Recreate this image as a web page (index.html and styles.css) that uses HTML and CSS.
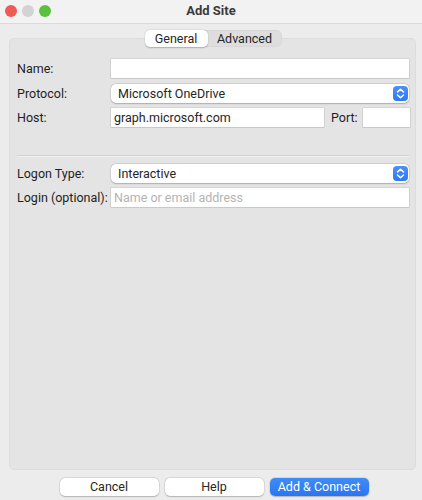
FILE: index.html
```html
<!DOCTYPE html>
<html>
<head>
<meta charset="utf-8">
<link rel="stylesheet" href="styles.css">
</head>
<body>
<div class="window">
  <div class="titlebar">
    <div class="lights">
      <span class="light red"></span>
      <span class="light gray"></span>
      <span class="light green"></span>
    </div>
    <div class="title">Add Site</div>
  </div>
  <div class="main">
    <div class="group">
      <div class="tabs">
        <div class="seg">
          <span class="tab active">General</span>
          <span class="tab">Advanced</span>
        </div>
      </div>
      <div class="form">
        <div class="row">
          <label class="lbl">Name:</label>
          <div class="field"></div>
        </div>
        <div class="row">
          <label class="lbl">Protocol:</label>
          <div class="select"><span>Microsoft OneDrive</span><span class="stepper"><svg width="9" height="11" viewBox="0 0 9 11"><path d="M1.5 4 L4.5 1.2 L7.5 4 M1.5 7 L4.5 9.8 L7.5 7" fill="none" stroke="#fff" stroke-width="1.5" stroke-linecap="round" stroke-linejoin="round"/></svg></span></div>
        </div>
        <div class="row">
          <label class="lbl">Host:</label>
          <div class="field host">graph.microsoft.com</div>
          <label class="port-lbl">Port:</label>
          <div class="field port"></div>
        </div>
        <div class="sep"></div>
        <div class="row">
          <label class="lbl">Logon Type:</label>
          <div class="select"><span>Interactive</span><span class="stepper"><svg width="9" height="11" viewBox="0 0 9 11"><path d="M1.5 4 L4.5 1.2 L7.5 4 M1.5 7 L4.5 9.8 L7.5 7" fill="none" stroke="#fff" stroke-width="1.5" stroke-linecap="round" stroke-linejoin="round"/></svg></span></div>
        </div>
        <div class="row">
          <label class="lbl">Login (optional):</label>
          <div class="field placeholder">Name or email address</div>
        </div>
      </div>
    </div>
    <div class="buttons">
      <button class="btn">Cancel</button>
      <button class="btn">Help</button>
      <button class="btn primary">Add &amp; Connect</button>
    </div>
  </div>
</div>
</body>
</html>
```

FILE: styles.css
```css
html, body {
  margin: 0;
  padding: 0;
}
body {
  width: 422px;
  height: 500px;
  background: #ececec;
  font-family: Roboto, "Liberation Sans", Arial, sans-serif;
  font-size: 12.5px;
  color: #1f1f1f;
  overflow: hidden;
}
.window {
  width: 422px;
  height: 500px;
  display: flex;
  flex-direction: column;
}
.titlebar {
  height: 23px;
  flex: none;
  background: #f2f2f2;
  border-bottom: 1px solid #dadada;
  position: relative;
  display: flex;
  align-items: center;
  justify-content: center;
}
.lights {
  position: absolute;
  left: 5px;
  top: 5px;
  display: flex;
  gap: 5px;
}
.light {
  width: 12px;
  height: 12px;
  border-radius: 50%;
  display: block;
}
.red { background: #ee5b55; }
.gray { background: #d3d3d3; }
.green { background: #5ac13f; }
.title {
  font-weight: bold;
  font-size: 13px;
  color: #3a3a3a;
  margin-top: -2px;
}
.main {
  flex: 1;
  display: flex;
  flex-direction: column;
  padding: 14px 6px 0 9px;
}
.group {
  height: 432px;
  flex: none;
  background: #e4e4e4;
  border: 1px solid #dcdcdc;
  border-radius: 5px;
  box-sizing: border-box;
}
.tabs {
  display: flex;
  justify-content: center;
  margin-top: -9px;
  padding-left: 1px;
}
.seg {
  display: flex;
  background: #dedede;
  border-radius: 6px;
  box-shadow: inset 0 0 0 0.5px rgba(0,0,0,0.06);
}
.tab {
  height: 17px;
  line-height: 17px;
  color: #262626;
  border-radius: 5px;
  text-align: center;
}
.tab.active {
  background: #fff;
  width: 63px;
  box-shadow: 0 0.5px 1.5px rgba(0,0,0,0.25);
}
.tab:not(.active) {
  width: 74px;
}
.form {
  padding: 12px 6px 0 7px;
  display: flex;
  flex-direction: column;
}
.row {
  display: flex;
  align-items: center;
  height: 19px;
  margin-bottom: 5.5px;
}
.lbl {
  width: 94px;
  flex: none;
  white-space: nowrap;
}
.field {
  flex: 1;
  height: 19px;
  background: #fff;
  box-shadow: 0 0 0 0.5px rgba(0,0,0,0.12), 0 0.5px 0 0.5px rgba(0,0,0,0.06);
  box-sizing: border-box;
  padding: 0 3px;
  line-height: 19px;
  color: #262626;
  white-space: nowrap;
}
.field.host {
  flex: none;
  width: 213px;
}
.port-lbl {
  margin-left: 7px;
  width: 32px;
  flex: none;
}
.field.port {
  flex: none;
  width: 47px;
}
.field.placeholder {
  color: #b4b4b4;
}
.select {
  flex: 1;
  height: 19px;
  background: #fff;
  border-radius: 5px;
  box-shadow: 0 0 0 0.5px rgba(0,0,0,0.1), 0 0.5px 1.5px rgba(0,0,0,0.2);
  display: flex;
  align-items: center;
  justify-content: space-between;
  padding: 0 1px 0 7px;
  color: #262626;
}
.stepper {
  width: 15px;
  height: 15px;
  border-radius: 4px;
  background: linear-gradient(#4a91f7, #2f77f0);
  display: flex;
  align-items: center;
  justify-content: center;
}
.sep {
  height: 0;
  border-top: 1px solid #d2d2d2;
  border-bottom: 1px solid #f0f0f0;
  margin: 22px 0 7px 0;
}
.buttons {
  display: flex;
  justify-content: center;
  gap: 6px;
  margin-top: 8px;
  padding-left: 3px;
}
.btn {
  width: 99px;
  height: 18px;
  border: none;
  border-radius: 5px;
  background: #fff;
  font-family: inherit;
  font-size: 12.5px;
  color: #262626;
  padding: 0;
  line-height: 18px;
  box-shadow: 0 0 0 0.5px rgba(0,0,0,0.1), 0 0.5px 1.5px rgba(0,0,0,0.2);
}
.btn.primary {
  background: linear-gradient(#3f8cf7, #2b75f0);
  color: #fff;
}
```
